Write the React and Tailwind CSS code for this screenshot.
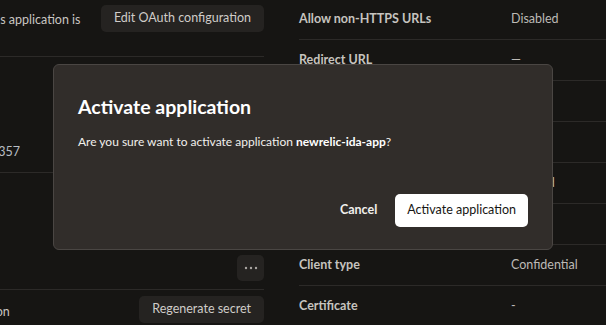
import React from 'react';

const rows = [
    { label: 'Allow non-HTTPS URLs', value: 'Disabled' },
    { label: 'Redirect URL', value: '—' },
    { label: 'Post logout redirect URL', value: '—' },
    { label: 'Logout URL', value: '—' },
    { label: 'Allow introspect', value: 'Enabled' },
    { label: 'Allowed scopes', value: '—' },
    { label: 'Client type', value: 'Confidential' },
    { label: 'Certificate', value: '-' },
];

const GhostButton = ({ children, className = '' }) => (
    <button className={`h-[27px] px-[13px] rounded-[5px] bg-[#252321] text-[12.5px] text-[#cfccc8] whitespace-nowrap ${className}`}>
        {children}
    </button>
);

const App = () => {
    return (
        <div
            className="relative w-[606px] h-[325px] overflow-hidden bg-[#161513] text-[#c9c6c2] flex"
            style={{ fontFamily: 'Lato, "Noto Sans", sans-serif' }}
        >
            {/* left column */}
            <div className="w-[264px] shrink-0 flex flex-col">
                <div className="h-[57px] flex items-start justify-between pt-[5px] border-b border-[#2c2a28]">
                    <span className="-ml-[17px] mt-[6px] text-[12.5px] text-[#c9c6c2] whitespace-nowrap">This application is</span>
                    <GhostButton>Edit OAuth configuration</GhostButton>
                </div>
                <div className="h-[116px] flex items-end pb-[10px] border-b border-[#2c2a28]">
                    <span className="-ml-[9px] text-[12.5px] text-[#b9bec4]">2357</span>
                </div>
                <div className="h-[117px] flex items-end justify-end pb-[8px] border-b border-[#2c2a28]">
                    <button className="w-[27px] h-[26px] rounded-[5px] bg-[#252321] flex items-center justify-center">
                        <svg width="14" height="4" viewBox="0 0 14 4" fill="#a9a6a2">
                            <circle cx="2" cy="2" r="1.2" />
                            <circle cx="7" cy="2" r="1.2" />
                            <circle cx="12" cy="2" r="1.2" />
                        </svg>
                    </button>
                </div>
                <div className="flex items-start justify-between pt-[6px]">
                    <span className="-ml-[37px] mt-[7px] text-[12.5px] text-[#c9c6c2] whitespace-nowrap">Rotation</span>
                    <GhostButton className="h-[26px]">Regenerate secret</GhostButton>
                </div>
            </div>

            {/* right column */}
            <div className="ml-[35px] flex-1 flex flex-col -mt-[1px]">
                {rows.map((row) => (
                    <div key={row.label} className="h-[41px] shrink-0 flex items-center border-b border-[#2c2a28]">
                        <span className="w-[212px] shrink-0 text-[12.5px] font-bold text-[#c6c3bf]">{row.label}</span>
                        <span className="text-[12.5px] text-[#bdbab6]">{row.value}</span>
                    </div>
                ))}
            </div>

            {/* dialog */}
            <div className="absolute left-[53px] top-[64px] w-[500px] h-[186px] rounded-[6px] border border-[#4a4643] bg-[#312d2a] flex flex-col px-6 pt-[30px] pb-[22px]">
                <h2 className="text-[19.5px] font-bold text-white leading-tight">Activate application</h2>
                <p className="mt-[14px] text-[12px] text-[#f2f0ed]">
                    Are you sure want to activate application <span className="font-bold text-white">newrelic-ida-app</span>?
                </p>
                <div className="mt-auto flex items-center justify-end gap-[18px]">
                    <button className="text-[12.5px] font-bold text-[#f2f0ed]">Cancel</button>
                    <button className="h-[33px] px-[12px] rounded-[5px] bg-white text-[12.5px] text-[#161513]">
                        Activate application
                    </button>
                </div>
            </div>
        </div>
    );
};

export default App;
